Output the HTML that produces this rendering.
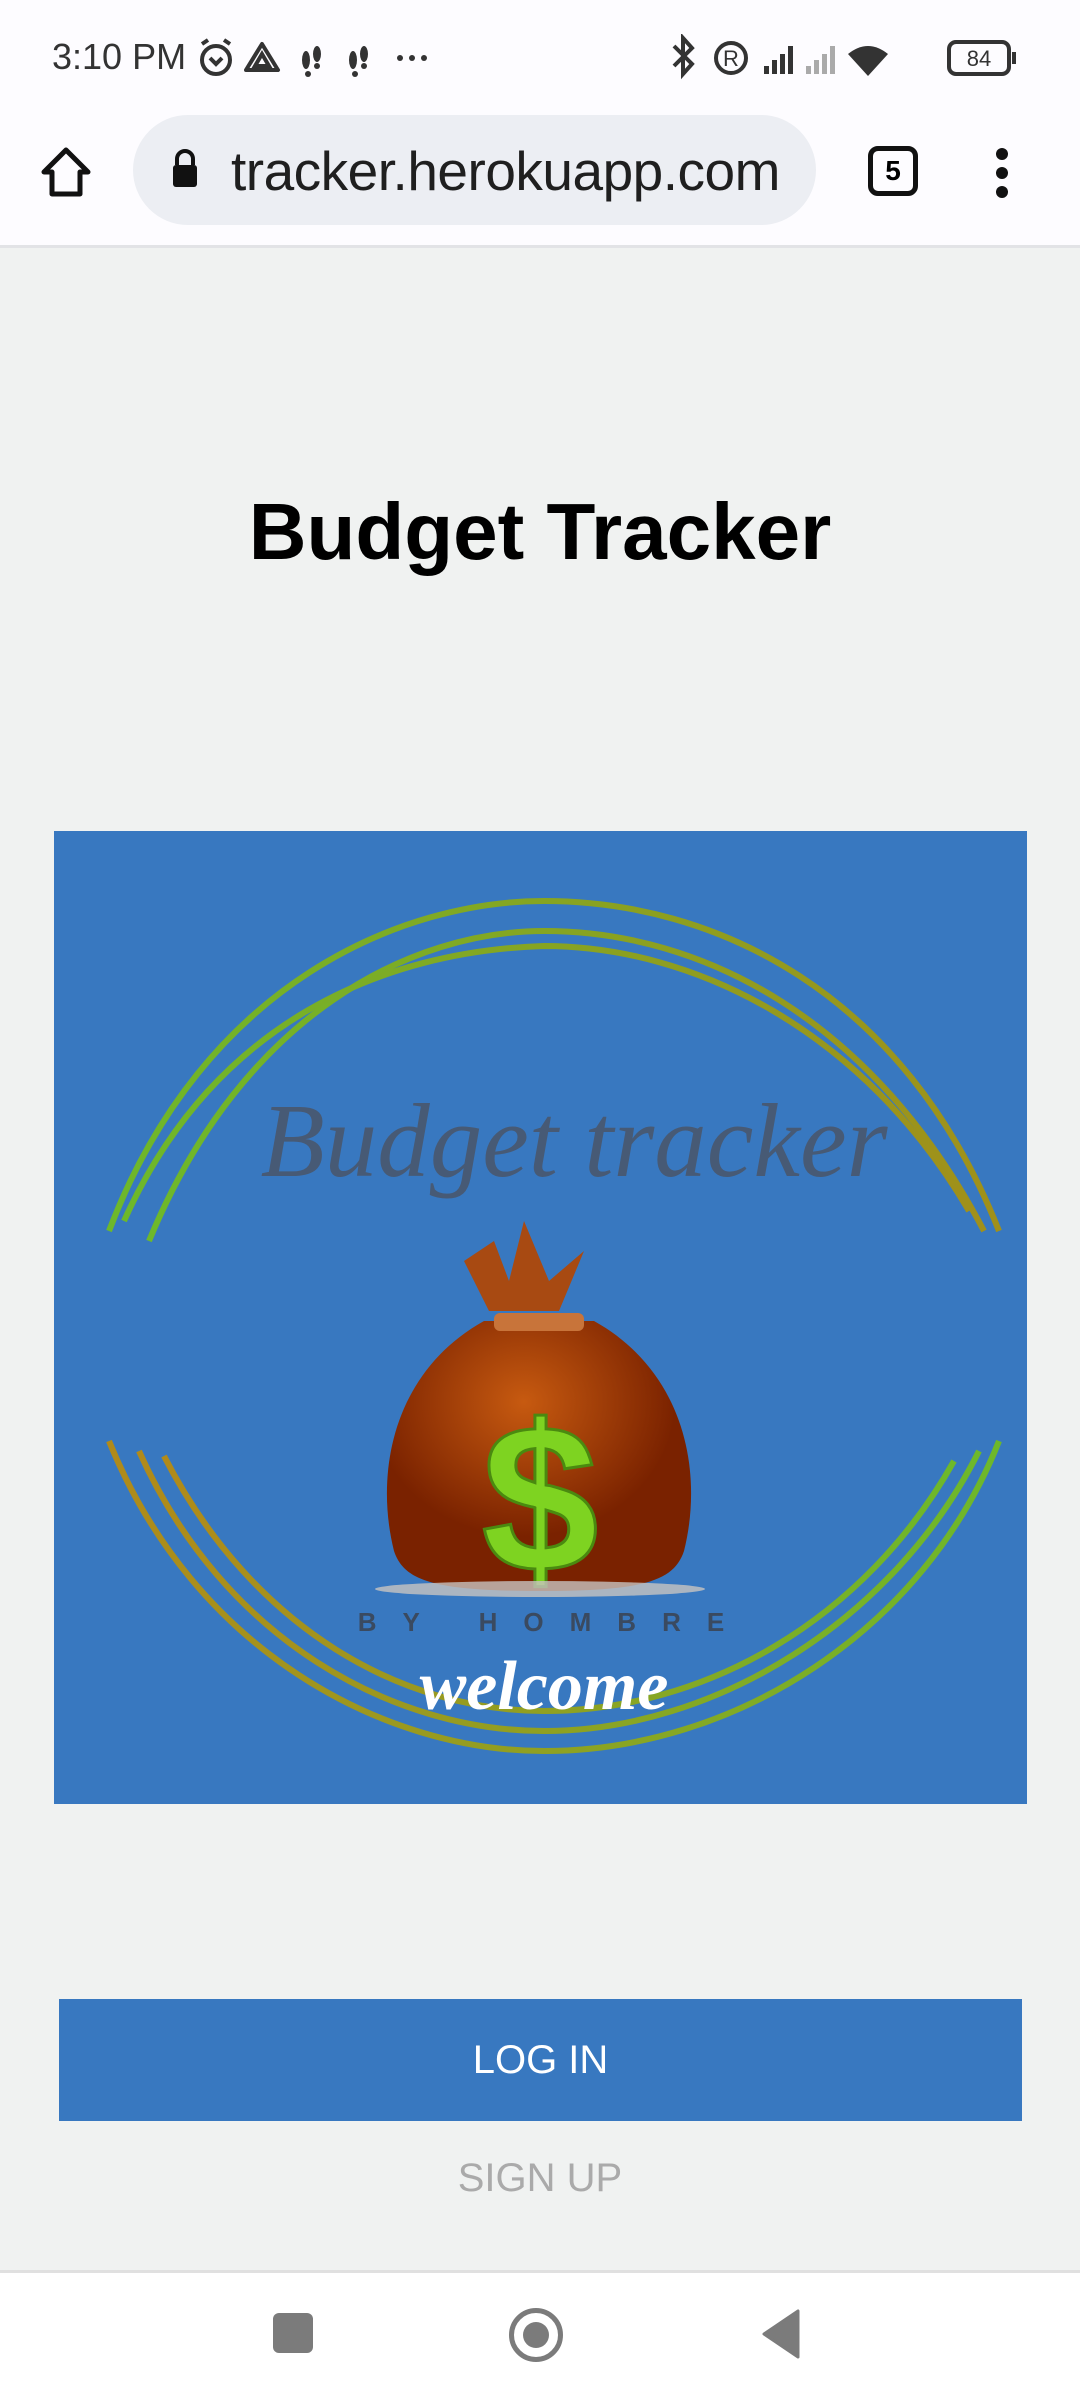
<!DOCTYPE html>
<html><head><meta charset="utf-8"><style>
*{margin:0;padding:0;box-sizing:border-box}
body{width:1080px;height:2400px;background:#f0f2f1;font-family:"Liberation Sans",sans-serif;position:relative;overflow:hidden}
.top{position:absolute;left:0;top:0;width:1080px;height:248px;background:#fdfcff;border-bottom:3px solid #e2e3e6}
.st{position:absolute;top:36px;font-size:36px;color:#333}
.url{position:absolute;left:133px;top:115px;width:683px;height:110px;border-radius:55px;background:#eceef3}
.url span{position:absolute;left:98px;top:24px;font-size:55px;color:#1f1f1f;letter-spacing:-0.5px}
h1{position:absolute;left:0;width:1080px;top:486px;text-align:center;font-size:80px;font-weight:bold;color:#000}
.img{position:absolute;left:54px;top:831px;width:973px;height:973px;background:#3878c0}
.btn{position:absolute;left:59px;top:1999px;width:963px;height:122px;background:#3878c0;color:#fff;font-size:40px;text-align:center;line-height:122px}
.su{position:absolute;left:0;width:1080px;top:2156px;text-align:center;font-size:40px;color:#aaa}
.nav{position:absolute;left:0;top:2270px;width:1080px;height:130px;background:#fff;border-top:3px solid #e0e0e0}
</style></head><body>
<div class="top">
 <div class="st" style="left:52px">3:10 PM</div>
 <svg style="position:absolute;left:196px;top:36px" width="260" height="44" viewBox="0 0 260 44" fill="none" stroke="#333" stroke-width="4">
  <circle cx="20" cy="24" r="14"/><path d="M14 22 L20 28 L26 22"/><path d="M6 8 L12 4 M34 8 L28 4"/>
  <path d="M66 8 L82 34 H50 Z" stroke-linejoin="round"/><path d="M66 18 L73 30 H59 Z"/>
  <g fill="#333" stroke="none"><ellipse cx="110" cy="24" rx="4" ry="9"/><circle cx="112" cy="38" r="3"/><ellipse cx="121" cy="18" rx="4" ry="8"/><circle cx="121" cy="30" r="3"/>
  <ellipse cx="157" cy="24" rx="4" ry="9"/><circle cx="159" cy="38" r="3"/><ellipse cx="168" cy="18" rx="4" ry="8"/><circle cx="168" cy="30" r="3"/>
  <circle cx="204" cy="22" r="3"/><circle cx="216" cy="22" r="3"/><circle cx="228" cy="22" r="3"/></g>
 </svg>
 <svg style="position:absolute;left:668px;top:34px" width="350" height="48" viewBox="0 0 350 48">
  <path d="M6 12 L24 30 L15 40 V4 L24 14 L6 32" fill="none" stroke="#333" stroke-width="4"/>
  <circle cx="63" cy="24" r="15" fill="none" stroke="#333" stroke-width="4"/><text x="63" y="32" text-anchor="middle" font-size="22" font-family="Liberation Sans" fill="#333">R</text>
  <g fill="#333"><rect x="96" y="32" width="5" height="8"/><rect x="104" y="26" width="5" height="14"/><rect x="112" y="20" width="5" height="20"/><rect x="120" y="12" width="5" height="28"/></g>
  <g fill="#aaa"><rect x="138" y="32" width="5" height="8"/><rect x="146" y="26" width="5" height="14"/><rect x="154" y="20" width="5" height="20"/><rect x="162" y="12" width="5" height="28"/></g>
  <path d="M180 20 Q200 4 220 20 L200 42 Z" fill="#333"/>
  <rect x="281" y="8" width="60" height="32" rx="7" fill="none" stroke="#333" stroke-width="4"/><rect x="344" y="18" width="4" height="12" fill="#333"/>
  <text x="311" y="32" text-anchor="middle" font-size="22" font-family="Liberation Sans" fill="#333">84</text>
 </svg>
 <svg style="position:absolute;left:40px;top:146px" width="52" height="52" viewBox="0 0 52 52"><path d="M26 4 L48 26 H40 V48 H12 V26 H4 Z" fill="none" stroke="#111" stroke-width="5" stroke-linejoin="round"/></svg>
 <div class="url"><svg style="position:absolute;left:38px;top:34px" width="28" height="40" viewBox="0 0 28 40"><path d="M6 16 V10 a8 8 0 0 1 16 0 V16" fill="none" stroke="#111" stroke-width="4"/><rect x="2" y="16" width="24" height="22" rx="3" fill="#111"/></svg><span>tracker.herokuapp.com</span></div>
 <div style="position:absolute;left:868px;top:146px;width:50px;height:50px;border:5px solid #111;border-radius:10px;font-size:28px;font-weight:bold;text-align:center;line-height:40px">5</div>
 <div style="position:absolute;left:996px;top:148px;width:12px;height:12px;border-radius:6px;background:#111;box-shadow:0 19px 0 #111,0 38px 0 #111"></div>
</div>
<h1>Budget Tracker</h1>
<div class="img">
<svg width="973" height="973" viewBox="0 0 973 973">
<defs><linearGradient id="g" x1="0" x2="1"><stop offset="0" stop-color="#6db82a"/><stop offset="1" stop-color="#a0901a"/></linearGradient>
<linearGradient id="g2" x1="0" x2="1"><stop offset="0" stop-color="#b08a1a"/><stop offset="1" stop-color="#6db82a"/></linearGradient>
<radialGradient id="b" cx="0.45" cy="0.3"><stop offset="0" stop-color="#c75a10"/><stop offset="1" stop-color="#7a2200"/></radialGradient></defs>
<g fill="none" stroke="url(#g)" stroke-width="6">
<path d="M55 400 C150 150 350 70 490 70 C660 70 850 160 945 400"/>
<path d="M95 410 C190 180 360 100 490 100 C650 100 820 190 930 400"/>
<path d="M70 390 C160 190 330 120 490 115 C640 115 810 200 915 380"/>
</g>
<g fill="none" stroke="url(#g2)" stroke-width="6">
<path d="M55 610 C140 820 330 920 490 920 C680 920 870 800 945 610"/>
<path d="M85 620 C170 810 340 900 490 900 C660 900 840 790 925 620"/>
<path d="M110 625 C200 800 350 880 490 880 C650 880 810 790 900 630"/>
</g>
<text x="520" y="345" text-anchor="middle" font-family="Liberation Serif,serif" font-style="italic" font-size="105" fill="#4a5568" opacity="0.85">Budget tracker</text>
<path d="M410 430 L440 410 L455 450 L470 390 L495 450 L530 420 L505 480 H435 Z" fill="#a84a12"/>
<path d="M430 490 C340 540 320 640 340 720 C350 750 380 760 486 760 C590 760 620 750 630 720 C650 640 630 540 540 490 Z" fill="url(#b)"/>
<rect x="440" y="482" width="90" height="18" rx="6" fill="#c8743a"/>
<text x="486" y="740" text-anchor="middle" font-family="Liberation Sans,sans-serif" font-weight="bold" font-size="210" fill="#7ed321" stroke="#4a8a10" stroke-width="3">$</text>
<ellipse cx="486" cy="758" rx="165" ry="8" fill="#c8c4c0" opacity="0.8"/>
<text x="500" y="800" text-anchor="middle" font-family="Liberation Sans,sans-serif" font-weight="bold" font-size="26" letter-spacing="26" fill="#3a4a60">BY HOMBRE</text>
<text x="490" y="878" text-anchor="middle" font-family="Liberation Serif,serif" font-style="italic" font-weight="bold" font-size="70" fill="#fff">welcome</text>
</svg></div>
<div class="btn">LOG IN</div>
<div class="su">SIGN UP</div>
<div class="nav">
 <div style="position:absolute;left:273px;top:40px;width:40px;height:40px;border-radius:6px;background:#7b7b7b"></div>
 <div style="position:absolute;left:509px;top:35px;width:54px;height:54px;border-radius:50%;border:5px solid #7b7b7b"><div style="margin:9px;width:26px;height:26px;border-radius:50%;background:#7b7b7b"></div></div>
 <svg style="position:absolute;left:760px;top:36px" width="40" height="50" viewBox="0 0 40 50"><path d="M38 2 V48 L4 25 Z" fill="#7b7b7b" stroke="#7b7b7b" stroke-linejoin="round" stroke-width="3"/></svg>
</div>
</body></html>
